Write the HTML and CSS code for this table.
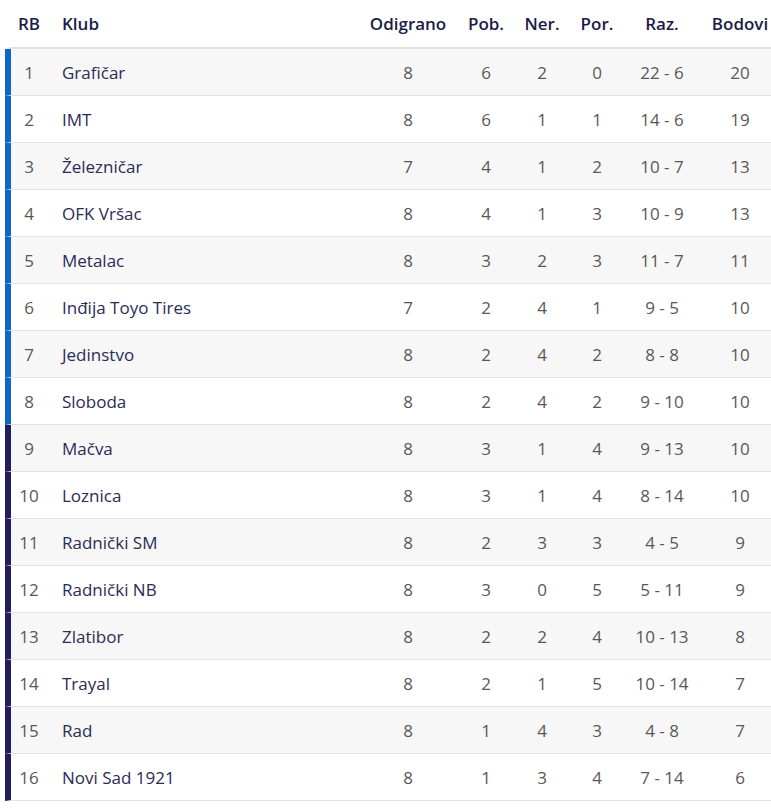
FILE: index.html
```html
<!DOCTYPE html>
<html lang="sr">
<head>
<meta charset="utf-8">
<title>Tabela</title>
<link rel="stylesheet" href="styles.css">
</head>
<body>
<div class="wrap">
<table class="standings">
  <colgroup>
    <col class="c-rb"><col class="c-club"><col class="c-od"><col class="c-pob"><col class="c-ner"><col class="c-por"><col class="c-raz"><col class="c-bod">
  </colgroup>
  <thead>
    <tr>
      <th class="rb">RB</th>
      <th class="club">Klub</th>
      <th>Odigrano</th>
      <th>Pob.</th>
      <th>Ner.</th>
      <th>Por.</th>
      <th>Raz.</th>
      <th>Bodovi</th>
    </tr>
  </thead>
  <tbody>
    <tr class="up"><td class="rb">1</td><td class="club">Grafičar</td><td>8</td><td>6</td><td>2</td><td>0</td><td>22 - 6</td><td>20</td></tr>
    <tr class="up"><td class="rb">2</td><td class="club">IMT</td><td>8</td><td>6</td><td>1</td><td>1</td><td>14 - 6</td><td>19</td></tr>
    <tr class="up"><td class="rb">3</td><td class="club">Železničar</td><td>7</td><td>4</td><td>1</td><td>2</td><td>10 - 7</td><td>13</td></tr>
    <tr class="up"><td class="rb">4</td><td class="club">OFK Vršac</td><td>8</td><td>4</td><td>1</td><td>3</td><td>10 - 9</td><td>13</td></tr>
    <tr class="up"><td class="rb">5</td><td class="club">Metalac</td><td>8</td><td>3</td><td>2</td><td>3</td><td>11 - 7</td><td>11</td></tr>
    <tr class="up"><td class="rb">6</td><td class="club">Inđija Toyo Tires</td><td>7</td><td>2</td><td>4</td><td>1</td><td>9 - 5</td><td>10</td></tr>
    <tr class="up"><td class="rb">7</td><td class="club">Jedinstvo</td><td>8</td><td>2</td><td>4</td><td>2</td><td>8 - 8</td><td>10</td></tr>
    <tr class="up"><td class="rb">8</td><td class="club">Sloboda</td><td>8</td><td>2</td><td>4</td><td>2</td><td>9 - 10</td><td>10</td></tr>
    <tr class="down"><td class="rb">9</td><td class="club">Mačva</td><td>8</td><td>3</td><td>1</td><td>4</td><td>9 - 13</td><td>10</td></tr>
    <tr class="down"><td class="rb">10</td><td class="club">Loznica</td><td>8</td><td>3</td><td>1</td><td>4</td><td>8 - 14</td><td>10</td></tr>
    <tr class="down"><td class="rb">11</td><td class="club">Radnički SM</td><td>8</td><td>2</td><td>3</td><td>3</td><td>4 - 5</td><td>9</td></tr>
    <tr class="down"><td class="rb">12</td><td class="club">Radnički NB</td><td>8</td><td>3</td><td>0</td><td>5</td><td>5 - 11</td><td>9</td></tr>
    <tr class="down"><td class="rb">13</td><td class="club">Zlatibor</td><td>8</td><td>2</td><td>2</td><td>4</td><td>10 - 13</td><td>8</td></tr>
    <tr class="down"><td class="rb">14</td><td class="club">Trayal</td><td>8</td><td>2</td><td>1</td><td>5</td><td>10 - 14</td><td>7</td></tr>
    <tr class="down"><td class="rb">15</td><td class="club">Rad</td><td>8</td><td>1</td><td>4</td><td>3</td><td>4 - 8</td><td>7</td></tr>
    <tr class="down"><td class="rb">16</td><td class="club">Novi Sad 1921</td><td>8</td><td>1</td><td>3</td><td>4</td><td>7 - 14</td><td>6</td></tr>
  </tbody>
</table>
</div>
</body>
</html>
```
FILE: styles.css
```css
html, body {
  margin: 0;
  padding: 0;
  background: #ffffff;
  overflow: hidden;
}
body {
  font-family: "Open Sans", "Noto Sans", sans-serif;
  font-size: 17px;
}
.wrap {
  padding-left: 5px;
  width: 790px;
}
.standings {
  border-collapse: separate;
  border-spacing: 0;
  table-layout: fixed;
  width: 782px;
}
.c-rb { width: 44px; }
.c-club { width: 316px; }
.c-od { width: 86px; }
.c-pob { width: 70px; }
.c-ner { width: 42px; }
.c-por { width: 68px; }
.c-raz { width: 62px; }
.c-bod { width: 94px; }

.standings th {
  height: 47px;
  padding: 0;
  font-weight: 600;
  color: #1b1b48;
  text-align: center;
  border-bottom: 2px solid #e2e2e2;
  white-space: nowrap;
  vertical-align: middle;
}
.standings td {
  height: 46px;
  padding: 0;
  text-align: center;
  color: #585858;
  border-bottom: 1px solid #e3e3e3;
  white-space: nowrap;
  vertical-align: middle;
}
.standings .rb {
  padding-right: 2px;
}
.standings th.club,
.standings td.club {
  text-align: left;
  padding-left: 13px;
}
.standings td.club {
  color: #2b2b55;
}
.standings tbody tr:nth-child(odd) {
  background: #f7f7f7;
}
.standings tbody tr:nth-child(even) {
  background: #ffffff;
}
.standings tr.up td.rb {
  border-left: 6px solid #0b68c8;
}
.standings tr.down td.rb {
  border-left: 6px solid #221d5e;
}
.standings thead th.rb {
  border-left: 6px solid transparent;
}
```
